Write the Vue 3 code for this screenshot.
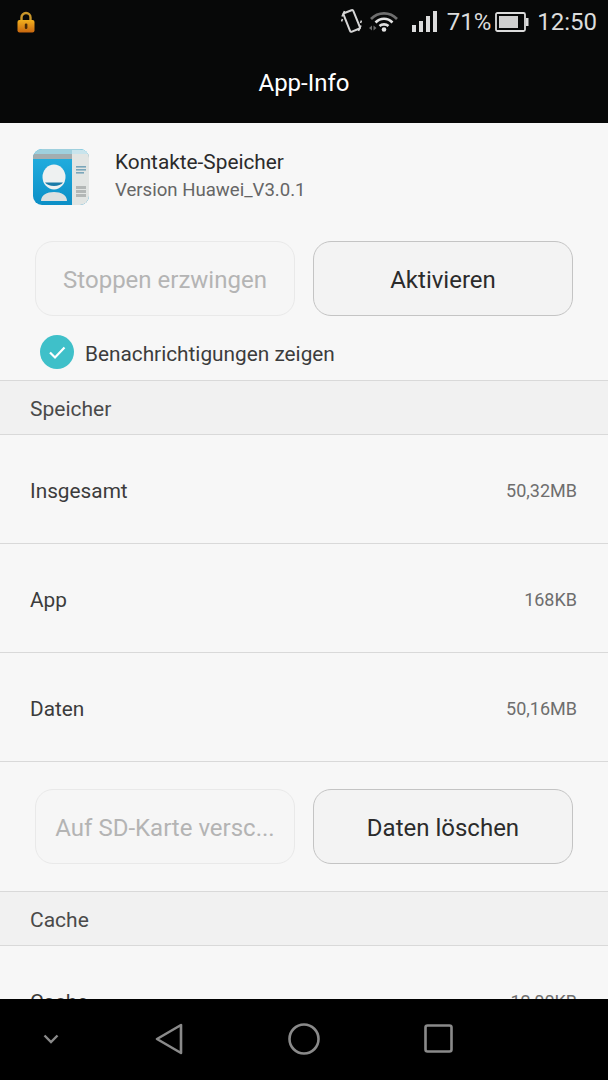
<template>
  <div class="screen">
    <header class="topbar">
      <div class="statusbar">
        <svg class="lock" width="18" height="22" viewBox="0 0 18 22">
          <defs>
            <linearGradient id="lockBody" x1="0" y1="0" x2="0" y2="1">
              <stop offset="0" stop-color="#f2b01e" />
              <stop offset="1" stop-color="#c8660f" />
            </linearGradient>
          </defs>
          <path d="M4.500 10V6.500a4.500 4.500 0 0 1 9 0V10" fill="none" stroke="#c9962a" stroke-width="2.400" />
          <rect x="0.500" y="9" width="17" height="12.500" rx="2" fill="url(#lockBody)" />
          <rect x="7.800" y="12.500" width="2.600" height="5.500" rx="1.200" fill="#4a2a08" />
        </svg>
        <div class="status-right">
          <svg class="vibrate" width="21" height="24" viewBox="0 0 21 24" fill="none" stroke="#d6d6d6">
            <rect x="5.500" y="2" width="10.500" height="20" rx="1.500" stroke-width="2" transform="rotate(-22 10.500 12)" />
            <path d="M3.500 2L1 7.500M1.500 10L0.500 12.500M17.500 22L20 16.500M19.500 14L20.500 11.500" stroke-width="1.600" />
          </svg>
          <svg class="wifi" width="30" height="21" viewBox="0 0 30 21" fill="none">
            <path d="M2 8C9 0.500 21 0.500 28 8" stroke="#6e6e6e" stroke-width="2.600" />
            <path d="M6.500 11.500C11.500 6.500 18.500 6.500 23.500 11.500" stroke="#e2e2e2" stroke-width="2.600" />
            <path d="M10.500 15C13 12.800 17 12.800 19.500 15" stroke="#e2e2e2" stroke-width="2.600" />
            <circle cx="15" cy="18.500" r="2.300" fill="#e2e2e2" />
            <path d="M0 17l3-2.500v5zM4.500 14.500l3 2.500-3 2.500z" fill="#6e6e6e" />
          </svg>
          <div class="signal">
            <span class="bar" v-for="h in signalBars" :key="h" :style="{ height: h + 'px' }"></span>
          </div>
          <span class="percent">71%</span>
          <svg class="battery" width="34" height="20" viewBox="0 0 34 20" fill="none">
            <rect x="1" y="1" width="29" height="18" rx="1.500" stroke="#dcdcdc" stroke-width="1.800" />
            <rect x="4" y="4" width="19" height="12" fill="#d0d0d0" />
            <rect x="31" y="6" width="2.500" height="8" fill="#dcdcdc" />
          </svg>
          <span class="clock">12:50</span>
        </div>
      </div>
      <h1 class="page-title">App-Info</h1>
    </header>

    <main class="content">
      <div class="app-head">
        <svg class="app-icon" width="56" height="56" viewBox="0 0 56 56">
          <defs>
            <clipPath id="iconClip"><rect width="56" height="56" rx="9" /></clipPath>
            <linearGradient id="iconBlue" x1="0" y1="0" x2="0" y2="1">
              <stop offset="0" stop-color="#25b2e2" />
              <stop offset="1" stop-color="#0c8fc6" />
            </linearGradient>
          </defs>
          <g clip-path="url(#iconClip)">
            <rect width="56" height="56" fill="url(#iconBlue)" />
            <rect width="56" height="5" fill="#9fd0de" />
            <rect y="5" width="56" height="5" fill="#a3adb0" />
            <rect x="39" y="1" width="17" height="4" fill="#c9e4ec" />
            <rect x="39" y="5" width="17" height="51" fill="#e2e5e3" />
            <rect x="43" y="17" width="10" height="1.600" fill="#7aa6ba" />
            <rect x="43" y="20" width="10" height="1.600" fill="#7aa6ba" />
            <rect x="43" y="23" width="8" height="1.600" fill="#7aa6ba" />
            <rect x="43" y="37" width="10" height="3" fill="#b3b7b6" />
            <rect x="43" y="41" width="10" height="3" fill="#b3b7b6" />
            <rect x="43" y="45" width="10" height="3" fill="#b3b7b6" />
            <ellipse cx="21" cy="28" rx="11.500" ry="12.500" fill="#eef1f1" />
            <path d="M12 33.500h18a10 6 0 0 1-18 0z" fill="#1a7ba8" />
            <path d="M8 52c0-6 6-9 13-9s13 3 13 9z" fill="#dde1e1" />
          </g>
        </svg>
        <div class="app-text">
          <div class="app-name">Kontakte-Speicher</div>
          <div class="app-version">Version Huawei_V3.0.1</div>
        </div>
      </div>

      <div class="btn-row first">
        <button class="btn" disabled>Stoppen erzwingen</button>
        <button class="btn">Aktivieren</button>
      </div>

      <div class="notify">
        <svg width="34" height="34" viewBox="0 0 34 34">
          <circle cx="17" cy="17" r="17" fill="#3fc0c9" />
          <path d="M10 17.500l5 5 9.500-10" fill="none" stroke="#fff" stroke-width="2.200" />
        </svg>
        <span class="notify-label">Benachrichtigungen zeigen</span>
      </div>

      <div class="section-head">Speicher</div>
      <div class="row" v-for="item in storage" :key="item.label">
        <span class="row-label">{{ item.label }}</span>
        <span class="row-value">{{ item.value }}</span>
      </div>

      <div class="btn-row second">
        <button class="btn" disabled>Auf SD-Karte versc...</button>
        <button class="btn">Daten löschen</button>
      </div>

      <div class="section-head">Cache</div>
      <div class="row">
        <span class="row-label">Cache</span>
        <span class="row-value">12,00KB</span>
      </div>
    </main>

    <nav class="navbar">
      <svg class="nav-down" width="16" height="10" viewBox="0 0 16 10" fill="none" stroke="#8a8a8a" stroke-width="2.400">
        <path d="M1.500 1.500L8 8l6.500-6.500" />
      </svg>
      <svg class="nav-back" width="28" height="32" viewBox="0 0 28 32" fill="none" stroke="#8a8a8a" stroke-width="2.600" stroke-linejoin="round">
        <path d="M26 2v28L2 16z" />
      </svg>
      <svg class="nav-home" width="32" height="32" viewBox="0 0 32 32" fill="none" stroke="#8a8a8a" stroke-width="2.600">
        <circle cx="16" cy="16" r="14.500" />
      </svg>
      <svg class="nav-recent" width="29" height="29" viewBox="0 0 29 29" fill="none" stroke="#8a8a8a" stroke-width="2.600">
        <rect x="1.500" y="1.500" width="26" height="26" rx="2" />
      </svg>
    </nav>
  </div>
</template>

<script setup>
const signalBars = [7, 11, 16, 21]

const storage = [
  { label: 'Insgesamt', value: '50,32MB' },
  { label: 'App', value: '168KB' },
  { label: 'Daten', value: '50,16MB' }
]
</script>

<style>
html, body {
  margin: 0;
  overflow: hidden;
}
</style>

<style scoped>
.screen {
  width: 608px;
  height: 1080px;
  display: flex;
  flex-direction: column;
  font-family: Roboto, "Liberation Sans", sans-serif;
  background: #f7f7f7;
}

.topbar {
  height: 123px;
  flex: none;
  background: #070808;
}

.statusbar {
  height: 44px;
  display: flex;
  align-items: center;
  justify-content: space-between;
  padding: 0 11px 0 17px;
}

.status-right {
  display: flex;
  align-items: center;
  color: #dcdcdc;
  font-size: 24px;
}

.vibrate { margin-top: -2px; }
.wifi { margin-left: 7px; margin-top: -2px; }

.signal {
  display: flex;
  align-items: flex-end;
  gap: 3px;
  margin-left: 13px;
  margin-top: -2px;
  height: 21px;
}

.bar {
  width: 4px;
  background: #dcdcdc;
}

.percent { margin-left: 10px; }
.battery { margin-left: 4px; }
.clock { margin-left: 8px; }

.page-title {
  margin: 0;
  padding-top: 23px;
  text-align: center;
  font-size: 24px;
  line-height: 32px;
  font-weight: 400;
  color: #fff;
}

.content {
  flex: 1;
  min-height: 0;
  overflow: hidden;
}

.app-head {
  display: flex;
  align-items: center;
  gap: 26px;
  height: 56px;
  padding: 26px 33px 0;
}

.app-icon { flex: none; }

.app-text { padding-bottom: 2px; }

.app-name {
  font-size: 20.800px;
  line-height: 27px;
  color: #2b2b2b;
}

.app-version {
  margin-top: 2px;
  font-size: 18.600px;
  line-height: 25px;
  color: #666;
}

.btn-row {
  display: grid;
  grid-template-columns: 260px 260px;
  gap: 18px;
  padding: 0 35px;
}

.btn-row.first { margin-top: 36px; }
.btn-row.second { padding-top: 27px; padding-bottom: 27px; }

.btn {
  height: 75px;
  box-sizing: border-box;
  border: 1px solid #c4c4c4;
  border-radius: 18px;
  background: #f3f3f3;
  color: #2b2b2b;
  font-family: inherit;
  font-size: 24px;
  padding: 3px 0 0;
  min-width: 0;
  white-space: nowrap;
}

.btn:disabled {
  border-color: #e9e9e9;
  background: #f6f6f6;
  color: #b4b4b4;
}

.notify {
  display: flex;
  align-items: center;
  gap: 11px;
  height: 64px;
  box-sizing: border-box;
  padding: 8px 0 0 40px;
  font-size: 20.800px;
  color: #3c3c3c;
}

.notify-label { padding-top: 4px; }

.section-head {
  height: 55px;
  box-sizing: border-box;
  display: flex;
  align-items: center;
  padding: 3px 0 0 30px;
  background: #f1f1f1;
  border-top: 1px solid #d9d9d9;
  border-bottom: 1px solid #d9d9d9;
  font-size: 21px;
  color: #4a4a4a;
}

.row {
  height: 109px;
  box-sizing: border-box;
  display: flex;
  align-items: center;
  justify-content: space-between;
  padding: 3px 31px 0 30px;
  border-bottom: 1px solid #d9d9d9;
}

.row-label {
  font-size: 20.800px;
  color: #3c3c3c;
}

.row-value {
  font-size: 18px;
  color: #6e6e6e;
}

.navbar {
  height: 81px;
  box-sizing: border-box;
  padding-bottom: 2px;
  flex: none;
  background: #000;
  display: flex;
  align-items: center;
}

.nav-down { margin-left: 43px; }
.nav-back { margin-left: 96px; }
.nav-home { margin-left: 105px; }
.nav-recent { margin-left: 104px; }
</style>
